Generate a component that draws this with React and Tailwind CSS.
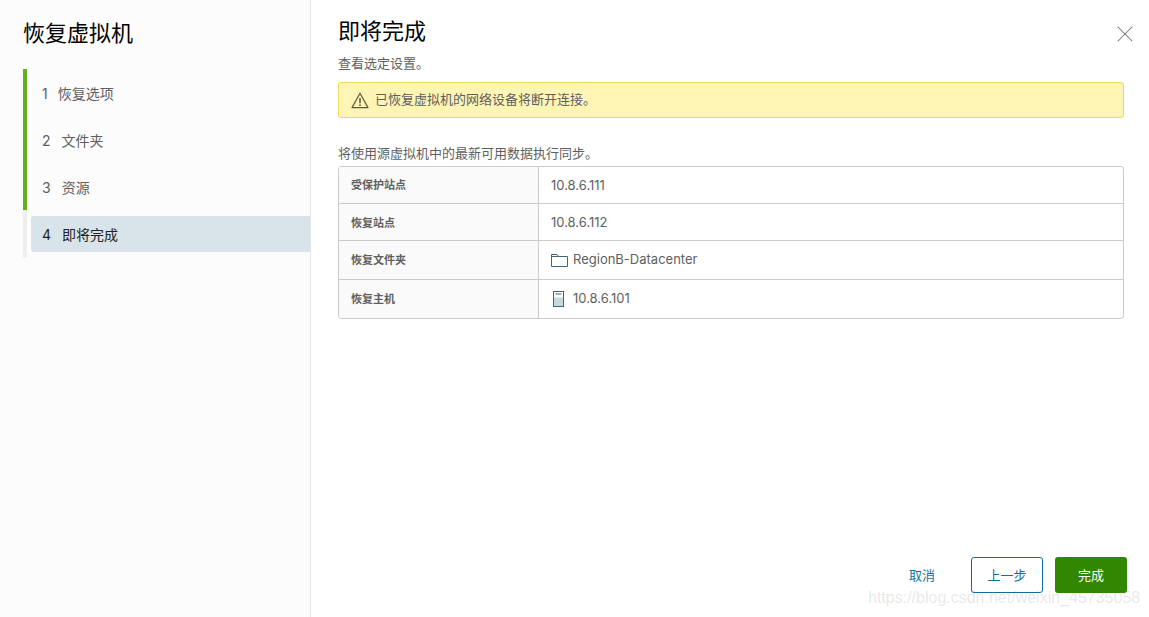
import { X } from "lucide-react"

const FONT = "font-['Inter','Noto_Sans_CJK_SC',sans-serif]"

const STEPS = [
  { n: 1, label: "恢复选项", gap: "ml-[10px]", done: true },
  { n: 2, label: "文件夹", gap: "ml-[11px]", done: true },
  { n: 3, label: "资源", gap: "ml-[11px]", done: true },
  { n: 4, label: "即将完成", gap: "ml-[11px]", done: false },
]

function FolderIcon() {
  return (
    <svg width="17" height="13" viewBox="0 0 17 13" fill="none" stroke="#3f6473" strokeWidth="1">
      <path d="M.5 12.5V.5h5.5l1.5 2h9v10z" />
      <path d="M.5 2.5h7" />
    </svg>
  )
}

function HostIcon() {
  return (
    <svg width="11" height="16" viewBox="0 0 11 16" fill="none">
      <rect x="1" y="6.5" width="9" height="9" fill="#c6d9de" />
      <rect x=".5" y=".5" width="10" height="15" stroke="#3f6473" />
      <path d="M2.5 3h6" stroke="#3f6473" />
    </svg>
  )
}

function WarnIcon() {
  return (
    <svg width="18" height="17" viewBox="0 0 18 17" fill="none" stroke="#5f5a3a" strokeWidth="1.2">
      <path d="M9 1.2 17 15.6H1z" strokeLinejoin="round" />
      <path d="M9 6v5.2" strokeWidth="1.6" />
      <path d="M9 12.4v1.5" strokeWidth="1.6" />
    </svg>
  )
}

const ROWS = [
  { label: "受保护站点", value: "10.8.6.111", h: "h-[36px]", nudge: "pt-px" },
  { label: "恢复站点", value: "10.8.6.112", h: "h-[37px]", nudge: "pt-0.5" },
  { label: "恢复文件夹", value: "RegionB-Datacenter", icon: <FolderIcon />, h: "h-[39px]", gap: "gap-[5px]" },
  { label: "恢复主机", value: "10.8.6.101", icon: <HostIcon />, h: "h-[39px]", gap: "gap-[9px]", pad: "pl-[14px]" },
]

export default function App() {
  return (
    <div className={`${FONT} relative flex h-[617px] w-[1149px] overflow-hidden bg-white text-[#5f5f5f]`}>
      <aside className="w-[311px] shrink-0 border-r border-[#e3e6e8] bg-[#fcfcfc] pl-[23px]">
        <h1 className="mt-[19px] h-[31px] text-[22px] leading-[29px] text-black">恢复虚拟机</h1>
        <ol className="mt-[19px]">
          {STEPS.map((s) => (
            <li
              key={s.n}
              className={`border-l-4 pl-1 ${s.done ? "h-[47px] border-[#62b01e] pt-[6px]" : "h-[48px] border-[#eeeeee] pt-[6px]"}`}
            >
              <div
                className={`flex h-9 items-center rounded-l-[3px] pl-[11px] text-[14px] ${s.done ? "" : "bg-[#d8e4ea] text-[#222222]"}`}
              >
                <span>{s.n}</span>
                <span className={s.gap}>{s.label}</span>
              </div>
            </li>
          ))}
        </ol>
      </aside>

      <main className="relative flex-1 pl-[27px] pr-[25px]">
        <div className="flex items-start justify-between">
          <h2 className="mt-[17px] h-[29px] text-[22px] leading-[29px] text-black">即将完成</h2>
          <button className="mr-[-15px] mt-[20px] text-[#747474]">
            <X size={28} strokeWidth={0.9} />
          </button>
        </div>
        <p className="mt-[6px] text-[13px] leading-[18px]">查看选定设置。</p>
        <div className="mt-[10px] flex h-[36px] items-center gap-[6px] rounded-[3px] border border-[#f0d95c] bg-[#fef4b4] pl-3 text-[13px]">
          <WarnIcon />
          <span>已恢复虚拟机的网络设备将断开连接。</span>
        </div>
        <p className="mt-[26px] text-[13px] leading-[18px]">将使用源虚拟机中的最新可用数据执行同步。</p>
        <div className="mt-[4px] overflow-hidden rounded-[3px] border border-[#cccccc]">
          {ROWS.map((r, i) => (
            <div key={r.label} className={`flex ${r.h} ${i > 0 ? "border-t border-[#cccccc]" : ""}`}>
              <div className={`flex w-[200px] shrink-0 items-center border-r border-[#cccccc] bg-[#fafafa] pl-3 text-[11px] font-bold ${r.nudge ?? ""}`}>
                {r.label}
              </div>
              <div className={`flex items-center ${r.gap ?? ""} ${r.pad ?? "pl-3"} text-[13px] ${r.nudge ?? ""}`}>
                {r.icon}
                <span>{r.value}</span>
              </div>
            </div>
          ))}
        </div>
        <div className="absolute right-[22px] top-[557px] flex items-center text-[13px]">
          <button className="mr-[36px] pt-[2px] text-[#0f72a0]">取消</button>
          <button className="mr-3 h-9 w-[72px] rounded-[3px] border border-[#0f6f9c] bg-white pt-[2px] text-[#0f6f9c]">上一步</button>
          <button className="h-9 w-[72px] rounded-[3px] bg-[#318700] pt-[2px] text-white">完成</button>
        </div>
      </main>

      <span className="pointer-events-none absolute left-[868px] top-[589px] font-['Liberation_Sans',sans-serif] text-[16px] leading-[18px] text-[#56565626]">
        https://blog.csdn.net/weixin_45735058
      </span>
    </div>
  )
}
